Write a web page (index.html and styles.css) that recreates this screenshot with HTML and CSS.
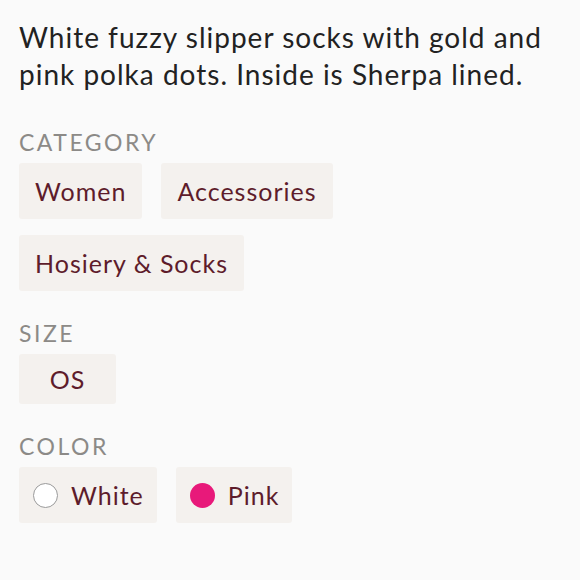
FILE: index.html
```html
<!DOCTYPE html>
<html>
<head>
<meta charset="utf-8">
<link rel="stylesheet" href="styles.css">
</head>
<body>
<div class="page">
  <p class="desc">White fuzzy slipper socks with gold and pink polka dots. Inside is Sherpa lined.</p>

  <section class="group">
    <h3 class="label">CATEGORY</h3>
    <div class="chips">
      <span class="chip">Women</span>
      <span class="chip">Accessories</span>
      <span class="chip">Hosiery &amp; Socks</span>
    </div>
  </section>

  <section class="group">
    <h3 class="label">SIZE</h3>
    <div class="chips">
      <span class="chip chip-size">OS</span>
    </div>
  </section>

  <section class="group">
    <h3 class="label">COLOR</h3>
    <div class="chips">
      <span class="chip chip-color"><span class="dot dot-white"></span>White</span>
      <span class="chip chip-color"><span class="dot dot-pink"></span>Pink</span>
    </div>
  </section>
</div>
</body>
</html>
```

FILE: styles.css
```css
html, body {
  margin: 0;
  padding: 0;
  background: #fafafa;
}

.page {
  padding: 19px 19px 0 19px;
  font-family: "Lato", "Open Sans", sans-serif;
}

.desc {
  margin: 0;
  font-size: 28px;
  line-height: 37px;
  letter-spacing: 1px;
  color: #222222;
  width: 540px;
}

.group {
  margin-top: 30px;
}

.group:first-of-type {
  margin-top: 37px;
}

.label {
  margin: 0 0 9px 0;
  font-size: 23px;
  line-height: 24px;
  font-weight: 400;
  letter-spacing: 2.5px;
  color: #8c8a87;
}

.chips {
  display: flex;
  flex-wrap: wrap;
  gap: 16px 19px;
}

.chip {
  display: inline-flex;
  align-items: center;
  height: 56px;
  padding: 0 16px;
  background: #f4f1ee;
  border-radius: 3px;
  font-size: 25px;
  letter-spacing: 1px;
  color: #5e1c2b;
  box-sizing: border-box;
}

.chip-size {
  height: 50px;
  width: 97px;
  justify-content: center;
  padding: 0;
}

.chip-color {
  padding: 0 13px 0 14px;
  height: 56px;
}

.dot {
  width: 25px;
  height: 25px;
  border-radius: 50%;
  margin-right: 13px;
  box-sizing: border-box;
}

.dot-white {
  background: #ffffff;
  border: 1px solid #9a9a9a;
}

.dot-pink {
  background: #e8197a;
}
```
